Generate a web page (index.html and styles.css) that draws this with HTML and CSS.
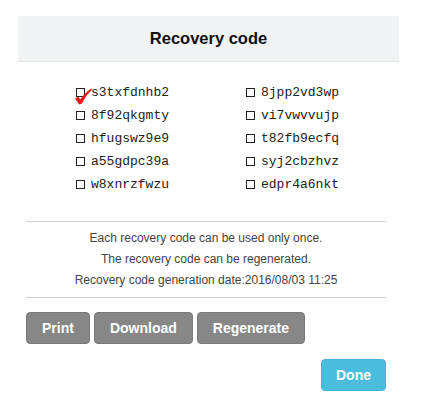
FILE: index.html
```html
<!DOCTYPE html>
<html lang="en">
<head>
    <meta charset="UTF-8">
    <meta name="viewport" content="width=device-width, initial-scale=1.0">
    <title>Recovery code</title>
    <link rel="stylesheet" href="styles.css">
</head>
<body>
    <div class="dialog">
        <div class="dialog-header">Recovery code</div>

        <div class="dialog-body">
            <!-- Recovery codes, two columns -->
            <div class="codes">
                <div class="code used">
                    <span class="box"></span>s3txfdnhb2
                    <svg class="check" width="18" height="17" viewBox="0 0 18 17">
                        <path d="M0 10.6 L3.4 8.8 L5.2 11.4 C8 7.2 11.6 3.6 16.2 0.4 L17 1.8 C13.2 5 10 9.6 7 15.4 L4.2 16.4 Z" fill="#e8161b"/>
                    </svg>
                </div>
                <div class="code"><span class="box"></span>8jpp2vd3wp</div>
                <div class="code"><span class="box"></span>8f92qkgmty</div>
                <div class="code"><span class="box"></span>vi7vwvvujp</div>
                <div class="code"><span class="box"></span>hfugswz9e9</div>
                <div class="code"><span class="box"></span>t82fb9ecfq</div>
                <div class="code"><span class="box"></span>a55gdpc39a</div>
                <div class="code"><span class="box"></span>syj2cbzhvz</div>
                <div class="code"><span class="box"></span>w8xnrzfwzu</div>
                <div class="code"><span class="box"></span>edpr4a6nkt</div>
            </div>

            <div class="info">
                <p>Each recovery code can be used only once.</p>
                <p>The recovery code can be regenerated.</p>
                <p>Recovery code generation date:2016/08/03 11:25</p>
            </div>

            <div class="actions">
                <button class="btn">Print</button>
                <button class="btn">Download</button>
                <button class="btn">Regenerate</button>
            </div>

            <div class="footer">
                <button class="btn btn-done">Done</button>
            </div>
        </div>
    </div>
</body>
</html>
```

FILE: styles.css
```css
body {
    font-family: "Liberation Sans", Arial, sans-serif;
    background-color: #ffffff;
    color: #333;
    margin: 0;
    padding: 0;
}
.dialog {
    margin: 16px 0 0 18px;
    width: 381px;
}
.dialog-header {
    background-color: #f2f3f5;
    border-bottom: 1px solid #e6e7e9;
    height: 45px;
    line-height: 45px;
    text-align: center;
    font-size: 16.5px;
    font-weight: bold;
    color: #111;
}
.dialog-body {
    padding: 0 13px 0 8px;
}
.codes {
    display: grid;
    grid-template-columns: 170px 170px;
    padding: 19px 0 0 50px;
    margin-bottom: 25px;
}
.code {
    position: relative;
    display: flex;
    align-items: center;
    height: 23px;
    font-family: "Liberation Mono", "Courier New", monospace;
    font-size: 13px;
    color: #222;
}
.box {
    width: 7px;
    height: 7px;
    border: 1px solid #222;
    margin-right: 6px;
    flex-shrink: 0;
}
.check {
    position: absolute;
    left: -1px;
    top: 7px;
}
.info {
    border-top: 1px solid #cfcfcf;
    border-bottom: 1px solid #cfcfcf;
    padding: 6px 0;
    text-align: center;
    font-size: 12px;
    color: #444;
}
.info p {
    margin: 0;
    line-height: 21px;
}
.actions {
    display: flex;
    gap: 4px;
    margin-top: 14px;
}
.btn {
    font-family: "Liberation Sans", Arial, sans-serif;
    background-color: #878787;
    color: white;
    border: 1px solid #7a7a7a;
    border-radius: 4px;
    height: 32px;
    padding: 0 15px;
    font-size: 14px;
    font-weight: bold;
    cursor: pointer;
}
.btn:hover {
    background-color: #7a7a7a;
}
.footer {
    display: flex;
    justify-content: flex-end;
    margin-top: 15px;
}
.btn-done {
    background-color: #4cbcdc;
    border-color: #46b4d4;
    padding: 0 14px;
}
.btn-done:hover {
    background-color: #3eb0d2;
}
```
